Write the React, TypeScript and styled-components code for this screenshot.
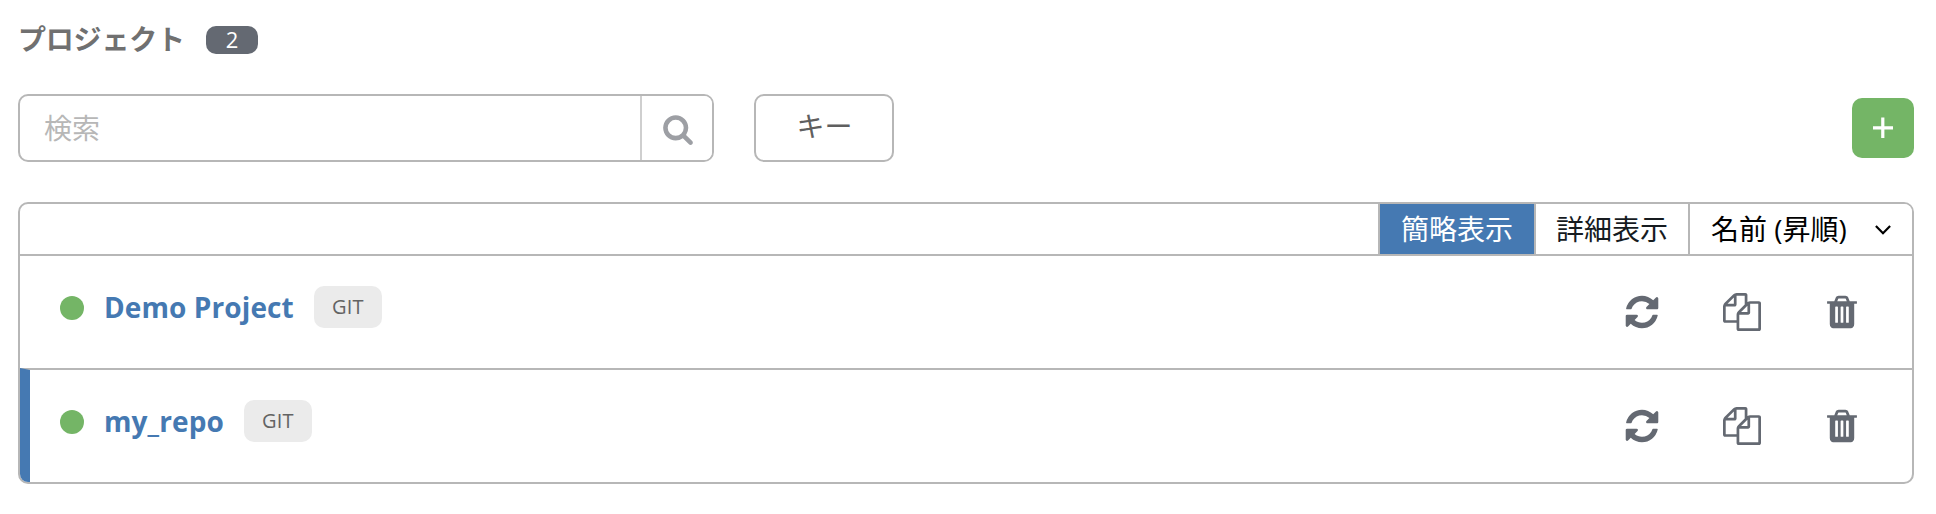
import React from 'react';
import styled, { createGlobalStyle, css } from 'styled-components';

const GlobalStyle = createGlobalStyle`
  *, *::before, *::after { box-sizing: border-box; }
  body {
    margin: 0;
    background: #fff;
    font-family: "Open Sans", "Noto Sans CJK JP", sans-serif;
    font-size: 28px;
    color: #161b1f;
  }
  button, input { font: inherit; }
`;

const line = '#b7b7b7';
const blue = '#4579b2';
const green = '#74b566';
const iconGrey = '#646972';

const Page = styled.main`
  padding: 18px 22px 30px 18px;
`;

const Header = styled.header`
  display: flex;
  align-items: center;
  height: 44px;
  margin-bottom: 32px;
`;

const Title = styled.h1`
  margin: 0;
  width: 188px;
  padding-bottom: 2px;
  font-size: 28px;
  line-height: 40px;
  font-weight: 700;
  letter-spacing: -0.2px;
  color: #707070;
  white-space: nowrap;
`;

const Count = styled.span`
  width: 52px;
  height: 28px;
  border-radius: 10px;
  background: ${iconGrey};
  color: #fff;
  font-size: 22px;
  line-height: 26px;
  text-align: center;
`;

const Toolbar = styled.div`
  display: flex;
  align-items: center;
  height: 68px;
  margin-bottom: 40px;
`;

const SearchGroup = styled.div`
  display: flex;
  width: 696px;
  height: 68px;
  margin-right: 40px;
  border: 2px solid ${line};
  border-radius: 10px;
  overflow: hidden;
`;

const SearchInput = styled.input`
  flex: 1;
  min-width: 0;
  padding: 0 24px;
  border: 0;
  background: transparent;
  outline: 0;
  &::placeholder { color: #b7b7b7; opacity: 1; }
`;

const SearchButton = styled.button`
  display: flex;
  align-items: center;
  justify-content: center;
  width: 72px;
  padding: 1px 0 0 2px;
  border: 0;
  border-left: 2px solid #cfcfcf;
  background: #fff;
  color: #9d9fa4;
`;

const KeyButton = styled.button`
  width: 140px;
  height: 68px;
  padding: 0 0 6px 1px;
  border: 2px solid ${line};
  border-radius: 10px;
  background: #fff;
  color: #5f5f5f;
`;

const AddButton = styled.button`
  display: flex;
  align-items: center;
  justify-content: center;
  width: 62px;
  height: 60px;
  margin-left: auto;
  padding: 0;
  border: 0;
  border-radius: 10px;
  background: ${green};
  color: #fff;
`;

const Panel = styled.section`
  border: 2px solid ${line};
  border-radius: 10px;
  overflow: hidden;
`;

const PanelToolbar = styled.div`
  display: flex;
  justify-content: flex-end;
  height: 50px;
`;

const ViewTab = styled.button<{ $active?: boolean; $width: number }>`
  width: ${p => p.$width}px;
  padding: 0;
  border: 0;
  border-left: 2px solid ${line};
  background: ${p => (p.$active ? blue : '#fff')};
  color: ${p => (p.$active ? '#fff' : '#161b1f')};
  line-height: 50px;
`;

const SortButton = styled.button`
  display: flex;
  align-items: center;
  justify-content: space-between;
  width: 224px;
  padding: 0 20px 0 21px;
  border: 0;
  border-left: 2px solid ${line};
  background: #fff;
  color: #000;
  line-height: 50px;
  white-space: nowrap;
`;

const Chevron = styled.svg`
  margin-top: 2px;
`;

const Row = styled.div<{ $selected?: boolean }>`
  display: flex;
  align-items: flex-start;
  height: 114px;
  padding: 30px 51px 0 40px;
  border-top: 2px solid ${line};
  ${p => p.$selected && css`
    padding-left: 30px;
    border-left: 10px solid ${blue};
  `}
`;

const Status = styled.span`
  width: 24px;
  height: 24px;
  margin: 10px 20px 0 0;
  border-radius: 50%;
  background: ${green};
`;

const Name = styled.a`
  margin-right: 20px;
  color: ${blue};
  font-weight: 700;
  letter-spacing: 0.1px;
  line-height: 42px;
`;

const Tag = styled.span`
  width: 68px;
  height: 42px;
  border-radius: 10px;
  background: #ebebeb;
  color: #636363;
  font-size: 20px;
  letter-spacing: 0.2px;
  line-height: 42px;
  text-align: center;
`;

const Actions = styled.div`
  display: flex;
  gap: 62px;
  margin: 7px 0 0 auto;
`;

const IconButton = styled.button`
  display: flex;
  width: 38px;
  height: 38px;
  padding: 0;
  border: 0;
  background: none;
  color: ${iconGrey};
`;

const icons = {
  search: 'M1216 832q0-185-131.5-316.5t-316.5-131.5-316.5 131.5-131.5 316.5 131.5 316.5 316.5 131.5 316.5-131.5 131.5-316.5zm512 832q0 52-38 90t-90 38q-54 0-90-38l-343-342q-179 124-399 124-143 0-273.5-55.5t-225-150-150-225-55.5-273.5 55.5-273.5 150-225 225-150 273.5-55.5 273.5 55.5 225 150 150 225 55.5 273.5q0 220-124 399l343 343q37 37 37 90z',
  refresh: 'M1639 1056q0 5-1 7-64 268-268 434.5t-478 166.5q-146 0-282.5-55t-243.5-157l-129 129q-19 19-45 19t-45-19-19-45v-448q0-26 19-45t45-19h448q26 0 45 19t19 45-19 45l-137 137q71 66 161 102t187 36q134 0 250-65t186-179q11-17 53-117 8-23 30-23h192q13 0 22.5 9.5t9.5 22.5zm25-800v448q0 26-19 45t-45 19h-448q-26 0-45-19t-19-45 19-45l138-138q-148-137-349-137-134 0-250 65t-186 179q-11 17-53 117-8 23-30 23h-199q-13 0-22.5-9.5t-9.5-22.5v-7q65-268 270-434.5t480-166.5q146 0 284 55.5t245 156.5l130-129q19-19 45-19t45 19 19 45z',
  copy: 'M1696 384q40 0 68 28t28 68v1216q0 40-28 68t-68 28h-960q-40 0-68-28t-28-68v-288h-544q-40 0-68-28t-28-68v-672q0-40 20-88t48-76l408-408q28-28 76-48t88-20h416q40 0 68 28t28 68v328q68-40 128-40h416zm-544 213l-299 299h299v-299zm-640-384l-299 299h299v-299zm196 647l316-316v-416h-384v416q0 40-28 68t-68 28h-416v640h512v-256q0-40 20-88t48-76zm956 804v-1152h-384v416q0 40-28 68t-68 28h-416v640h896z',
  trash: 'M704 1376v-704q0-14-9-23t-23-9h-64q-14 0-23 9t-9 23v704q0 14 9 23t23 9h64q14 0 23-9t9-23zm256 0v-704q0-14-9-23t-23-9h-64q-14 0-23 9t-9 23v704q0 14 9 23t23 9h64q14 0 23-9t9-23zm256 0v-704q0-14-9-23t-23-9h-64q-14 0-23 9t-9 23v704q0 14 9 23t23 9h64q14 0 23-9t9-23zm-544-992h448l-48-117q-7-9-17-11h-317q-10 2-17 11zm928 32v64q0 14-9 23t-23 9h-96v948q0 83-47 143.5t-113 60.5h-832q-66 0-113-58.5t-47-141.5v-952h-96q-14 0-23-9t-9-23v-64q0-14 9-23t23-9h309l70-167q15-37 54-63t79-26h320q40 0 79 26t54 63l70 167h309q14 0 23 9t9 23z',
};

function Icon({ name, size = 38 }: { name: keyof typeof icons; size?: number }) {
  return (
    <svg width={size} height={size} viewBox="0 0 1792 1792" fill="currentColor" aria-hidden="true">
      <path d={icons[name]} />
    </svg>
  );
}

const projects = [
  { name: 'Demo Project', scm: 'GIT', selected: false },
  { name: 'my_repo', scm: 'GIT', selected: true },
];

export default function App() {
  return (
    <Page>
      <GlobalStyle />
      <Header>
        <Title>プロジェクト</Title>
        <Count>2</Count>
      </Header>
      <Toolbar>
        <SearchGroup>
          <SearchInput placeholder="検索" />
          <SearchButton aria-label="検索">
            <Icon name="search" size={32} />
          </SearchButton>
        </SearchGroup>
        <KeyButton>キー</KeyButton>
        <AddButton aria-label="追加">
          <svg width="22" height="22" viewBox="0 0 22 22" stroke="currentColor" strokeWidth="3.2" aria-hidden="true">
            <path d="M1 10.800h20M10.800 .5v20.600" />
          </svg>
        </AddButton>
      </Toolbar>
      <Panel>
        <PanelToolbar>
          <ViewTab $active $width={156}>簡略表示</ViewTab>
          <ViewTab $width={154}>詳細表示</ViewTab>
          <SortButton>
            名前 (昇順)
            <Chevron width="18" height="12" viewBox="0 0 18 12" fill="none" stroke="currentColor" strokeWidth="2.2" aria-hidden="true">
              <path d="M1.900 2l7.100 7.200L16.100 2" />
            </Chevron>
          </SortButton>
        </PanelToolbar>
        {projects.map(p => (
          <Row key={p.name} $selected={p.selected}>
            <Status />
            <Name>{p.name}</Name>
            <Tag>{p.scm}</Tag>
            <Actions>
              <IconButton aria-label="更新"><Icon name="refresh" /></IconButton>
              <IconButton aria-label="コピー"><Icon name="copy" /></IconButton>
              <IconButton aria-label="削除"><Icon name="trash" /></IconButton>
            </Actions>
          </Row>
        ))}
      </Panel>
    </Page>
  );
}
